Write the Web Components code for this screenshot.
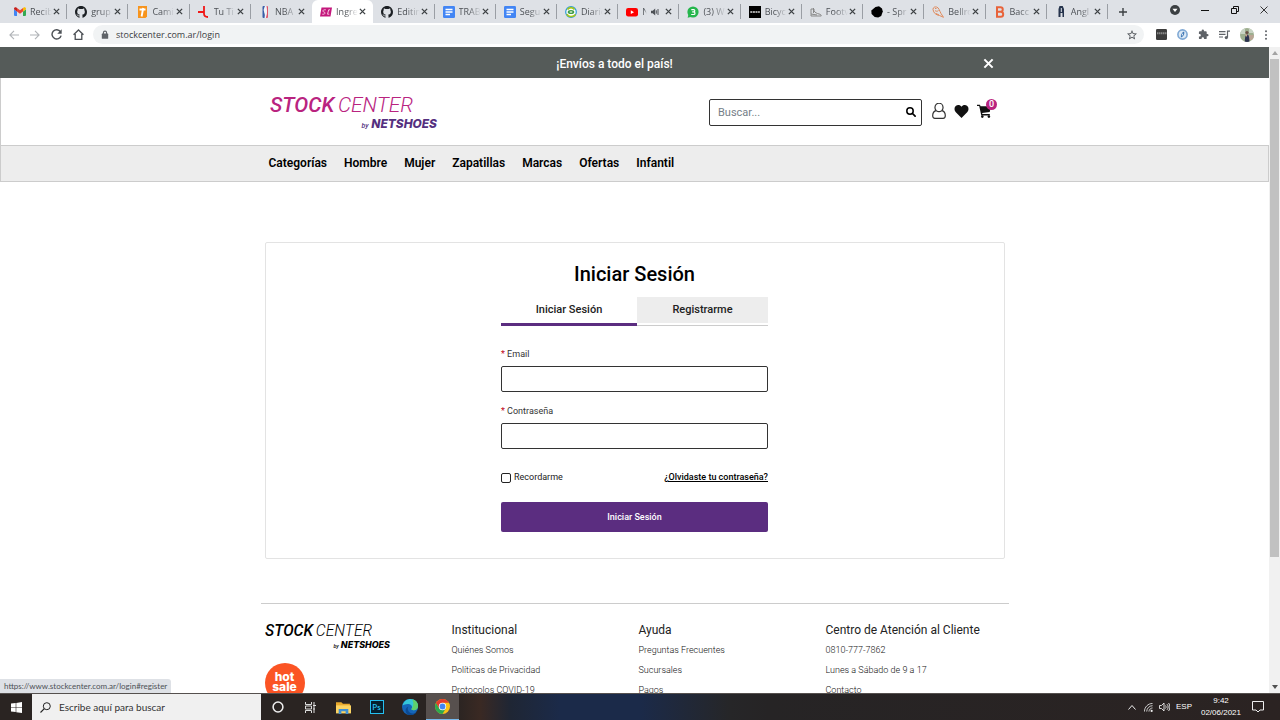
<!DOCTYPE html>
<html lang="es">
<head>
<meta charset="utf-8">
<title>Iniciar Sesión - Stock Center</title>
<style>
  html, body { margin: 0; height: 100%; overflow: hidden; background: #fff; }
  body { font-family: Roboto, "Liberation Sans", sans-serif; color: #222; }
</style>
</head>
<body>
<desktop-screen></desktop-screen>

<script>
const BASE = `
  *, *::before, *::after { box-sizing: border-box; }
  button, input { font: inherit; color: inherit; margin: 0; padding: 0; border: 0; background: none; border-radius: 0; outline: none; }
  a { color: inherit; text-decoration: none; }
  ui-icon { flex: none; }
`;

function define(name, css, html) {
  const template = document.createElement('template');
  customElements.define(name, class extends HTMLElement {
    constructor() {
      super();
      this.attachShadow({ mode: 'open' });
    }
    connectedCallback() {
      if (this.shadowRoot.childNodes.length) return;
      template.innerHTML = `<style>${BASE}${css}</style>${typeof html === 'function' ? html(this) : html}`;
      this.shadowRoot.append(template.content.cloneNode(true));
    }
  });
}

/* Each entry: [viewBox, markup] */
const ICONS = {
  gmail: ['0 0 24 24', '<path fill="#4285f4" d="M2 20h4V11L0 6.500V18a2 2 0 0 0 2 2z"/><path fill="#34a853" d="M18 20h4a2 2 0 0 0 2-2V6.500L18 11z"/><path fill="#ea4335" d="M6 11V4l6 4.500L18 4v7l-6 4.500z"/><path fill="#c5221f" d="M0 6.500 6 11V4L4.800 3.200C2.800 1.800 0 3 0 5.500z"/><path fill="#fbbc04" d="M24 6.500 18 11V4l1.200-.8C21.200 1.800 24 3 24 5.500z"/>'],
  github: ['0 0 16 16', '<path fill="#1b1f23" d="M8 0C3.580 0 0 3.580 0 8c0 3.540 2.290 6.530 5.470 7.590.4.070.55-.17.55-.38 0-.19-.01-.82-.01-1.490-2.010.37-2.530-.49-2.690-.94-.09-.23-.48-.94-.82-1.130-.28-.15-.68-.52-.01-.53.63-.01 1.080.58 1.230.82.72 1.210 1.870.87 2.330.66.07-.52.28-.87.51-1.070-1.780-.2-3.640-.89-3.640-3.950 0-.87.31-1.590.82-2.150-.08-.2-.36-1.020.08-2.120 0 0 .67-.21 2.200.82a7.600 7.600 0 0 1 4 0c1.530-1.040 2.200-.82 2.200-.82.44 1.100.16 1.920.08 2.120.51.56.82 1.270.82 2.150 0 3.070-1.870 3.750-3.650 3.950.29.25.54.73.54 1.480 0 1.070-.01 1.930-.01 2.200 0 .21.15.46.55.38A8 8 0 0 0 16 8c0-4.420-3.580-8-8-8z"/>'],
  camino: ['0 0 12 12', '<path fill="#f7941d" d="M2 0h9v10.500L9.500 12H2z"/><path fill="none" stroke="#fff" stroke-width="1.900" d="M3.500 3.500h6M7.200 2 5.600 10.500"/>'],
  tienda: ['0 0 12 12', '<path fill="none" stroke="#f01818" stroke-width="1.800" d="M6 0v7.500C6 10 7.500 11 10 11M0 6h6"/>'],
  nba: ['0 0 12 12', '<path fill="#3a5fa8" d="M3.500 1a1 1 0 0 1 1-1H6L5 5l1.500 7h-2a1 1 0 0 1-1-1z"/><path fill="#e0566a" d="M7 0h1a1 1 0 0 1 1 1v10a1 1 0 0 1-1 1H6.500L8 7z"/><path fill="#f4f4f8" d="M6 0h1.500L8 5l-1 7H5.500L6 8 4.600 4z"/>'],
  stock: ['0 0 12 12', '<path fill="#c4187c" d="M1.500 1.500H12l-1.500 9H0z"/><path fill="none" stroke="#f3c6e0" d="M5.800 3.800H4.200c-1.600 0-1.600 2.200-.2 2.200s1.200 2.200-.2 2.200H2.300M10 3.800H8.700L7.500 8.200h1.800"/>'],
  docs: ['0 0 12 12', '<rect width="12" height="12" rx="1.200" fill="#4285f4"/><path stroke="#fff" stroke-width="1.300" d="M2.500 3.500h7M2.500 6h7M2.500 8.500h4.500"/>'],
  diario: ['0 0 12 12', '<circle cx="6" cy="6" r="5.300" fill="#fff" stroke="#2a9bd6" stroke-width="1.200"/><path fill="none" stroke="#a5c51c" stroke-width="1.600" d="M2 8c1 3 6 3.500 8.500.5M2.500 3.500c2-2.500 5-2.500 7 0"/><ellipse cx="6" cy="6" rx="3.300" ry="2" fill="#3d9b46"/><ellipse cx="6" cy="6" rx="1.500" ry=".8" fill="#e8f6dd"/>'],
  youtube: ['0 0 12 12', '<rect y="2" width="12" height="8.400" rx="2.200" fill="#f00"/><path fill="#fff" d="m4.800 4.300 3.200 1.900-3.200 1.900z"/>'],
  whatsapp: ['0 0 12 12', '<circle cx="6" cy="6" r="5.600" fill="#25b64c"/><path fill="#25b64c" d="m.6 11.700 1-4 3 3z"/><path fill="none" stroke="#fff" stroke-width="1.200" d="M4.300 3.600h2.300c1.600 0 1.600 2.300 0 2.300H5.200h1.500c1.700 0 1.700 2.600 0 2.600H4.200"/>'],
  bicycle: ['0 0 12 12', '<path d="M0 0h12v12H0z"/><path stroke="#ddd" stroke-width="1.400" stroke-dasharray="2 .6" d="M1.300 6h9.500"/>'],
  shoe: ['0 0 12 12', '<path fill="none" stroke="#888" d="M1 8.500V3h3v2c1 1.500 3 2.500 5 3 1.500.2 2.200.8 2.200 2H1zM3.500 2v5M1 8l6 1"/>'],
  blob: ['0 0 12 12', '<path d="M4.500 1 8 .3l3 2.200.8 3-1.600 4.500-3 1.500-3.500-.6L.6 8 .3 4.500z"/>'],
  owl: ['0 0 12 12', '<path fill="none" stroke="#e08a5c" d="M1 3.500C1 1 3 .7 4.500 1 7 1.500 7.500 5 9 7.500l2.500 3.800-4-1.800C4 9 1.500 7 1 3.500zM3 4.500c1 1 2.500 1 3.500 0M4 7.500l3 1.500M3 2.500h1.500"/>'],
  letterB: ['0 0 12 12', '<path fill="none" stroke="#e8633a" stroke-width="2" d="M3 1.300h3.500c3 0 3 4.400 0 4.400H3h3.800c3.200 0 3.200 5 0 5H3zM3 .3v11.400"/>'],
  angle: ['0 0 12 12', '<path fill="#26344d" d="M4.500 0h3.200L9 3v8H7.500V7h-2v4H3.500V3z"/><path stroke="#dfe3ea" stroke-width="1" d="M6.300 2v4"/>'],
  close: ['0 0 8 8', '<path stroke="currentColor" stroke-width="1.500" d="m1 1 6 6M7 1 1 7"/>'],
  plus: ['0 0 8 8', '<path stroke="currentColor" stroke-width="1.400" d="M4 0v8M0 4h8"/>'],
  speaker: ['0 0 8 8', '<path fill="currentColor" d="M0 2.700h1.700L4.200.5v7L1.700 5.300H0z"/><path fill="none" stroke="currentColor" d="M5.300 2.300v3.400M7 1v6"/>'],
  account: ['0 0 10 10', '<circle cx="5" cy="5" r="5" fill="#3c4043"/><path fill="#fff" d="M2.500 3.800h5L5 7z"/>'],
  minimize: ['0 0 8 8', '<path stroke="#111" d="M0 4.500h8"/>'],
  restore: ['0 0 8 8', '<path fill="none" stroke="#111" d="M.5 2.500h5v5h-5zM2.500 2.500v-2h5v5h-2"/>'],
  cross: ['0 0 8 8', '<path stroke="#222" stroke-width=".9" d="m.5.500 7 7M7.500.5l-7 7"/>'],
  back: ['0 0 10 10', '<path fill="none" stroke="currentColor" stroke-width="1.100" d="M10 5H1M5 .8.900 5 5 9.200"/>'],
  forward: ['0 0 10 10', '<path fill="none" stroke="currentColor" stroke-width="1.100" d="M0 5h9M5 .8 9.100 5 5 9.200"/>'],
  reload: ['0 0 10 10', '<path fill="none" stroke="currentColor" stroke-width="1.300" d="M8.600 2.500A4.200 4.200 0 1 0 9.200 6"/><path fill="currentColor" d="M9.700.3v4H5.700z"/>'],
  home: ['0 0 10 10', '<path fill="none" stroke="currentColor" stroke-width="1.200" d="M.5 5.200 5 .9l4.500 4.300M2 4.500v4.900h6V4.500"/>'],
  lock: ['0 0 8 10', '<rect x=".8" y="3.600" width="6.400" height="5.200" rx=".6" fill="#5f6368"/><path fill="none" stroke="#5f6368" stroke-width="1.100" d="M2.400 4V2.700a1.600 1.600 0 0 1 3.200 0V4"/>'],
  star: ['0 0 24 24', '<path fill="currentColor" d="m22 9.240-7.190-.62L12 2 9.190 8.630 2 9.240l5.460 4.730L5.820 21 12 17.270 18.180 21l-1.630-7.030zM12 15.400l-3.760 2.270 1-4.280-3.320-2.880 4.380-.38L12 6.100l1.710 4.040 4.380.38-3.320 2.880 1 4.280z"/>'],
  extDark: ['0 0 11 11', '<rect width="11" height="11" rx="1.300" fill="#3c3c3c"/><path stroke="#888" stroke-width="2" stroke-dasharray="1.500 .5" d="M1 4.300h9.500"/>'],
  extBlue: ['0 0 11 11', '<circle cx="5.500" cy="5.500" r="4.600" fill="#dce9f5" stroke="#7fa8d4" stroke-width="1.600"/><path fill="#3e77b5" d="M7 2.500c1 2-.5 5-3 6-.7-2 .6-5 3-6z"/><path fill="#fff" d="M6 4.200c.5 1-.3 2.300-1.200 2.700 0-1 .3-2 1.200-2.700z"/>'],
  puzzle: ['0 0 24 24', '<path fill="#5f6368" d="M20.500 11H19V7a2 2 0 0 0-2-2h-4V3.500a2.500 2.500 0 0 0-5 0V5H4a2 2 0 0 0-2 2v3.800h1.500a2.700 2.700 0 0 1 0 5.400H2V20a2 2 0 0 0 2 2h3.800v-1.500a2.700 2.700 0 0 1 5.400 0V22H17a2 2 0 0 0 2-2v-4h1.500a2.500 2.500 0 0 0 0-5z"/>'],
  playlist: ['0 0 11 10', '<path fill="none" stroke="#5f6368" stroke-width="1.200" d="M0 1.600h6.500M0 4.300h6.500M0 7h4M8.500 7.500V1.200H11"/><circle cx="7.300" cy="7.600" r="1.600" fill="#5f6368"/>'],
  avatar: ['0 0 14 14', '<clipPath id="a"><circle cx="7" cy="7" r="7"/></clipPath><g clip-path="url(#a)"><path fill="#9dae8f" d="M0 0h14v14H0z"/><path fill="#c8d3c4" d="M0 0h5v6H0zM9 1h5v4H9z"/><path fill="#b9a594" d="M8 7h6v5H8z"/><circle cx="7" cy="4.500" r="1.600" fill="#6b4f45"/><path fill="#2c3350" d="M4.800 14c0-5 .8-7.500 2.400-7.500S9.400 9 9.400 14z"/><path fill="#d6a58d" d="M5 6.500h2.500L6.500 9z"/></g>'],
  dots: ['0 0 4 10', '<g fill="#5f6368"><circle cx="2" cy="1.200" r="1"/><circle cx="2" cy="5" r="1"/><circle cx="2" cy="8.800" r="1"/></g>'],
  magnify: ['0 0 10 10', '<circle cx="4" cy="4" r="3.200" fill="none" stroke="currentColor" stroke-width="1.500"/><path stroke="currentColor" stroke-width="1.700" stroke-linecap="round" d="m6.500 6.500 2.600 2.600"/>'],
  user: ['0 0 14 16', '<path fill="none" stroke="#333" stroke-width="1.200" d="M4.300 7.600C3 6.500 2.900 5 3 4.200a4 4 0 0 1 8 0c.1.800 0 2.300-1.300 3.400M4.300 7.600C6 9 8 9 9.700 7.600c2.400.4 3.600 2.400 3.600 5.200 0 1.500-.8 2.500-2.200 2.500H2.900C1.500 15.300.7 14.300.7 12.800.7 10 1.900 8 4.300 7.600z"/>'],
  heart: ['0 0 14 13', '<path fill="#111" d="M7 13 1.100 7C-.4 5.400-.4 2.600 1.200 1.100 2.800-.4 5.600-.3 7 1.700c1.400-2 4.200-2.100 5.800-.6 1.600 1.500 1.600 4.300.1 5.900z"/>'],
  cart: ['0 0 15 14', '<path fill="#111" d="M0 .8h3l.5 1.400H14l-1.300 5.700-7.600 1 .3 1.200h7.400v1.300H4.300L2.200 2H0z"/><circle cx="5.300" cy="12.600" r="1.300" fill="#111"/><circle cx="11.900" cy="12.600" r="1.300" fill="#111"/>'],
  up: ['0 0 6 4', '<path fill="currentColor" d="M3 0 6 4H0z"/>'],
  down: ['0 0 6 4', '<path fill="currentColor" d="M0 0h6L3 4z"/>'],
  windows: ['0 0 11 11', '<path fill="#fff" d="M0 1.600 4.700 1v4.200H0zM5.300.9 11 0v5.200H5.300zM0 5.800h4.700V10L0 9.400zM5.300 5.800H11V11l-5.700-.8z"/>'],
  glass: ['0 0 11 11', '<circle cx="6.800" cy="4.200" r="3.500" fill="none" stroke="#222"/><path stroke="#222" stroke-width="1.100" d="M4.300 6.700.5 10.500"/>'],
  cortana: ['0 0 11 11', '<circle cx="5.500" cy="5.500" r="4.500" fill="none" stroke="#eee" stroke-width="1.400"/>'],
  taskview: ['0 0 11 11', '<path fill="none" stroke="#ddd" d="M.5 0v2.500h6V0M.5 11V8.500h6V11M.5 4h6v3h-6zM9 0v11M8 3.500h3M8 7h2"/>'],
  folder: ['0 0 14 12', '<path fill="#e8a92d" d="M0 1h5l1.500 1.500H13V11H0z"/><path fill="#fcd462" d="M0 4h14v7.500H0z"/><path fill="#3f8fd2" d="M2.500 12V7.500h9V12H9V9.500H5V12z"/>'],
  edge: ['0 0 16 16', '<circle cx="8" cy="8" r="8" fill="#1565b8"/><path fill="#35c6d8" d="M.5 6.500C1.800 2 5 0 8.500 0 13 0 16 3.300 16 7c0 3-2.200 4.300-4.300 4.300-2 0-2.600-.8-2-1.700.9-1.300.3-4.300-3.200-4.600-2.600-.2-4.600.7-6 1.500z"/><path fill="#5fd06b" d="M10 .3C14 1.200 16 4 16 7c0 3-2.200 4.300-4.300 4.300-2 0-2.600-.8-2-1.700C11 8 12.500 4 10 .3z"/><path fill="#0c4a92" d="M6.300 7.500C5 9.500 5.800 13.500 10 14.500c2 .4 4-.5 5-1.800-2 3-6 4-9 3C2.500 13 3 9 6.300 7.500z"/>'],
  chrome: ['0 0 16 16', '<circle cx="8" cy="8" r="8" fill="#fbc116"/><path fill="#e33b2e" d="M1.100 4A8 8 0 0 1 14.900 4H8L5 10z"/><path fill="#2da94f" d="M1.100 4A8 8 0 0 0 8 16l3.500-6L8 11.500 4.500 10z"/><path fill="#e33b2e" d="M1.100 4 4.600 10 8 4z"/><circle cx="8" cy="8" r="3.900" fill="#fff"/><circle cx="8" cy="8" r="3.100" fill="#4285f4"/>'],
  chevron: ['0 0 8 5', '<path fill="none" stroke="#eee" d="m.5 4.500 3.500-4 3.500 4"/>'],
  wifi: ['0 0 10 10', '<g fill="none" stroke="#ddd"><path d="M.5 9.500c0-5 4-9 9-9"/><path d="M3 9.500C3 6 6 3 9.500 3"/><path d="M5.500 9.500c0-2 2-4 4-4"/></g><circle cx="8.500" cy="8.800" r="1.200" fill="#eee"/>'],
  volume: ['0 0 11 10', '<path fill="none" stroke="#eee" stroke-width=".9" d="M.5 3.500h2L5 1v8L2.500 6.500h-2zM6.500 3.500c.8 1 .8 2 0 3M8 2.200c1.500 1.800 1.500 3.800 0 5.600M9.600 1c1.800 2.500 1.800 5.500 0 8"/>'],
  notice: ['0 0 12 12', '<path fill="none" stroke="#eee" d="M.5.500h11v8.500H8L6 11 4 9H.5z"/>']
};

customElements.define('ui-icon', class extends HTMLElement {
  connectedCallback() {
    if (this.shadowRoot) return;
    const [box, body] = ICONS[this.getAttribute('name')];
    const w = this.getAttribute('w'), h = this.getAttribute('h') || w;
    this.attachShadow({ mode: 'open' }).innerHTML =
      `<style>:host{display:block;width:${w}px;height:${h}px}svg{display:block}</style>
       <svg viewBox="${box}" width="${w}" height="${h}" aria-hidden="true">${body}</svg>`;
  }
});

/* ---------- Browser chrome ---------- */

define('browser-tab', `
  :host { display: flex; flex: 1 1 0; min-width: 0; align-items: center; height: 23px; padding: 0 6px 0 8px; border-right: 1px solid #a0a4a9; border-image: linear-gradient(transparent 5px, #9a9ea4 5px, #9a9ea4 18px, transparent 18px) 1; color: #4d5156; }
  :host([active]) { background: #fff; border-radius: 6px 6px 0 0; border-image: none; border-color: #fff; }
  :host([next-active]) { border-image: none; border-color: transparent; }
  .title { display: flex; align-items: center; flex: 1; min-width: 0; gap: 4px; text-align: left; }
  .text { flex: 1; min-width: 0; overflow: hidden; white-space: nowrap; line-height: 14px; -webkit-mask-image: linear-gradient(90deg, #000 40%, transparent 95%); mask-image: linear-gradient(90deg, #000 40%, transparent 95%); }
  .close { flex: none; color: #3c4043; }
  .audio { margin-right: 6px; }
`, el => `
  <button class="title"><ui-icon name="${el.getAttribute('icon')}" w="12"></ui-icon><span class="text"><slot></slot></span>
  ${el.hasAttribute('audio') ? '<ui-icon class="audio" name="speaker" w="8"></ui-icon>' : ''}</button>
  <button class="close" aria-label="Cerrar pestaña"><ui-icon name="close" w="7"></ui-icon></button>
`);

define('browser-tabs', `
  :host { display: flex; height: 23px; background: #dee1e6; font: 9px "Open Sans", "Noto Sans", sans-serif; }
  .strip { display: flex; flex: 1; min-width: 0; padding-left: 6px; }
  .new { width: 30px; display: grid; place-items: center; color: #3c4043; }
  .win { display: flex; align-items: center; width: 142px; justify-content: space-between; padding: 0 12px 3px 32px; }
`, `
  <div class="strip">
    <browser-tab icon="gmail">Recib</browser-tab>
    <browser-tab icon="github">grup</browser-tab>
    <browser-tab icon="camino">Cami</browser-tab>
    <browser-tab icon="tienda">Tu Ti</browser-tab>
    <browser-tab icon="nba" next-active>NBA</browser-tab>
    <browser-tab icon="stock" active>Ingre</browser-tab>
    <browser-tab icon="github">Editin</browser-tab>
    <browser-tab icon="docs">TRAB</browser-tab>
    <browser-tab icon="docs">Segu</browser-tab>
    <browser-tab icon="diario">Diario</browser-tab>
    <browser-tab icon="youtube" audio>N</browser-tab>
    <browser-tab icon="whatsapp">(3) W</browser-tab>
    <browser-tab icon="bicycle">Bicyc</browser-tab>
    <browser-tab icon="shoe">Footv</browser-tab>
    <browser-tab icon="blob">- Spr</browser-tab>
    <browser-tab icon="owl">Bellro</browser-tab>
    <browser-tab icon="letterB">Bacc</browser-tab>
    <browser-tab icon="angle">Angl</browser-tab>
  </div>
  <button class="new" aria-label="Nueva pestaña"><ui-icon name="plus" w="8"></ui-icon></button>
  <div class="win">
    <button aria-label="Buscar pestañas"><ui-icon name="account" w="10"></ui-icon></button>
    <button aria-label="Minimizar"><ui-icon name="minimize" w="8"></ui-icon></button>
    <button aria-label="Restaurar"><ui-icon name="restore" w="8"></ui-icon></button>
    <button aria-label="Cerrar"><ui-icon name="cross" w="8"></ui-icon></button>
  </div>
`);

define('browser-toolbar', `
  :host { display: flex; align-items: center; height: 24px; padding: 0 12px 1px 9px; background: #fff; color: #4d5156; font: 9px "Open Sans", "Noto Sans", sans-serif; }
  .nav { display: flex; gap: 11px; flex: none; }
  .nav .off { color: #b0b3b7; }
  .omni { display: flex; align-items: center; flex: 1; height: 19px; margin: 0 12px 0 9px; padding: 0 6px 0 8px; gap: 7px; border-radius: 10px; background: #f1f3f4; }
  .omni input { flex: 1; min-width: 0; height: 18px; padding-bottom: 1px; color: #3c4043; }
  .ext { display: flex; align-items: center; gap: 10px; flex: none; }
`, `
  <div class="nav">
    <button class="off" aria-label="Atrás"><ui-icon name="back" w="10"></ui-icon></button>
    <button class="off" aria-label="Adelante"><ui-icon name="forward" w="10"></ui-icon></button>
    <button aria-label="Recargar"><ui-icon name="reload" w="11"></ui-icon></button>
    <button aria-label="Inicio"><ui-icon name="home" w="11"></ui-icon></button>
  </div>
  <div class="omni">
    <ui-icon name="lock" w="8" h="10"></ui-icon>
    <input type="text" value="stockcenter.com.ar/login" aria-label="Dirección" spellcheck="false">
    <button aria-label="Favorito"><ui-icon name="star" w="12"></ui-icon></button>
  </div>
  <div class="ext">
    <button aria-label="Extensión"><ui-icon name="extDark" w="11"></ui-icon></button>
    <button aria-label="Extensión"><ui-icon name="extBlue" w="11"></ui-icon></button>
    <button aria-label="Extensiones"><ui-icon name="puzzle" w="11"></ui-icon></button>
    <button aria-label="Lista"><ui-icon name="playlist" w="11" h="10"></ui-icon></button>
    <button aria-label="Perfil"><ui-icon name="avatar" w="14"></ui-icon></button>
    <button aria-label="Menú"><ui-icon name="dots" w="4" h="10"></ui-icon></button>
  </div>
`);

define('scroll-bar', `
  :host { display: flex; flex-direction: column; align-items: center; width: 11px; flex: none; background: #f1f1f1; color: #505050; }
  .arrow { height: 12px; display: grid; place-items: center; flex: none; }
  .arrow.top { color: #a3a3a3; }
  .track { flex: 1; width: 9px; }
  .thumb { height: 80%; background: #c1c1c1; }
`, `
  <span class="arrow top"><ui-icon name="up" w="6" h="4"></ui-icon></span>
  <div class="track"><div class="thumb"></div></div>
  <span class="arrow"><ui-icon name="down" w="6" h="4"></ui-icon></span>
`);

/* ---------- Store page ---------- */

const CONTAINER = `.container { width: 100%; max-width: 748px; margin: 0 auto; }`;

define('store-logo', `
  :host { display: block; width: 167px; --main: #b9237f; --sub: #55307f; }
  :host([mono]) { width: 125px; --main: #000; --sub: #000; }
  svg { display: block; width: 100%; overflow: visible; }
  .main { fill: var(--main); font: italic 500 21px Roboto, sans-serif; }
  .thin { fill: var(--main); font: italic 300 21px Roboto, sans-serif; }
  .by { fill: var(--sub); font: italic 500 7px Roboto, sans-serif; }
  .sub { fill: var(--sub); font: italic 800 12px Inter, sans-serif; }
`, `
  <svg viewBox="0 0 168 34" role="img" aria-label="Stock Center by Netshoes">
    <text class="main" x="0" y="16">STOCK</text>
    <text class="thin" x="144" y="16" text-anchor="end">CENTER</text>
    <text class="by" x="92" y="32">by</text>
    <text class="sub" x="168" y="32" text-anchor="end">NETSHOES</text>
  </svg>
`);

define('promo-bar', `
  :host { display: block; background: #555b59; color: #fff; font-size: 12px; font-weight: 500; }
  ${CONTAINER}
  .container { display: flex; align-items: center; height: 31px; }
  p { flex: 1; margin: 0; padding-top: 2px; text-align: center; line-height: 16px; }
  button { width: 40px; height: 31px; display: grid; place-items: center; padding-top: 2px; }
`, `
  <div class="container"><p>¡Envíos a todo el país!</p><button aria-label="Cerrar aviso"><ui-icon name="close" w="11"></ui-icon></button></div>
`);

define('store-header', `
  :host { display: block; border-left: 1px solid #ccc; background: #fff; }
  ${CONTAINER}
  .container { display: flex; align-items: center; height: 67px; padding: 2px 12px 0 9px; }
  .search { display: flex; align-items: center; width: 213px; height: 27px; margin-left: auto; padding: 0 5px 0 8px; border: 1px solid #333; border-radius: 2px; font-size: 11px; }
  .search input { flex: 1; min-width: 0; height: 24px; }
  .search input::placeholder { color: #757e87; opacity: 1; }
  .search button { color: #000; padding-bottom: 2px; }
  .icons { display: flex; align-items: center; gap: 8px; margin-left: 10px; padding-bottom: 3px; }
  .cart { position: relative; width: 20px; }
  .badge { position: absolute; top: -5px; right: 0; width: 11px; height: 11px; border-radius: 50%; background: #b9237f; color: #fff; font-size: 9px; font-weight: 500; line-height: 11px; text-align: center; }
`, `
  <div class="container">
    <a href="#" aria-label="Inicio"><store-logo></store-logo></a>
    <form class="search">
      <input type="search" placeholder="Buscar..." aria-label="Buscar">
      <button type="button" aria-label="Buscar"><ui-icon name="magnify" w="10"></ui-icon></button>
    </form>
    <div class="icons">
      <a href="#" aria-label="Mi cuenta"><ui-icon name="user" w="14" h="16"></ui-icon></a>
      <a href="#" aria-label="Favoritos"><ui-icon name="heart" w="15" h="13"></ui-icon></a>
      <a class="cart" href="#" aria-label="Carrito"><ui-icon name="cart" w="15" h="14"></ui-icon><span class="badge">0</span></a>
    </div>
  </div>
`);

define('store-nav', `
  :host { display: block; border: 1px solid #ccc; background: #ededed; color: #000; font-size: 12px; font-weight: 600; }
  ${CONTAINER}
  .container { display: flex; align-items: center; gap: 17px; height: 35px; padding: 0 8px 1px; }
`, `
  <nav class="container">
    <a href="#">Categorías</a><a href="#">Hombre</a><a href="#">Mujer</a><a href="#">Zapatillas</a><a href="#">Marcas</a><a href="#">Ofertas</a><a href="#">Infantil</a>
  </nav>
`);

define('text-field', `
  :host { display: block; margin-bottom: 12px; font-size: 9px; line-height: 14px; }
  label { display: block; margin-bottom: 5px; color: #333; }
  .mark { color: #c00418; }
  input { display: block; width: 100%; height: 26px; padding: 0 8px; border: 1px solid #333; border-radius: 2px; background: #fff; }
`, el => `
  <label for="field"><span class="mark">*</span> ${el.getAttribute('label')}</label>
  <input id="field" type="${el.getAttribute('type')}">
`);

define('login-card', `
  :host { display: block; border: 1px solid #e3e3e3; border-radius: 2px; padding: 17px 16px 26px; background: #fff; }
  .inner { max-width: 267px; margin: 0 auto; }
  h1 { margin: 0 0 9px; font-size: 20px; font-weight: 500; line-height: 28px; text-align: center; color: #000; }
  .tabs { display: flex; margin-bottom: 21px; font-size: 11px; font-weight: 500; line-height: 26px; text-align: center; }
  .tabs a { flex: 131; height: 29px; background: #ededed content-box; padding-bottom: 2px; border-bottom: 1px solid #ccc; }
  .tabs a.on { flex: 136; background: none; padding: 0; border-bottom: 3px solid #5b2d80; }
  .row { display: flex; justify-content: space-between; align-items: center; margin: 21px 0 17px; font-size: 9px; line-height: 15px; }
  .check { display: flex; align-items: center; gap: 3px; }
  .check input { appearance: none; width: 10px; height: 10px; border: 1px solid #222; border-radius: 2px; background: #fff; }
  .row a { color: #000; font-weight: 500; text-decoration: underline; }
  .submit { display: block; width: 100%; height: 30px; border-radius: 2px; background: #5b2d80; color: #fff; font-size: 9px; font-weight: 500; }
`, `
  <div class="inner">
    <h1>Iniciar Sesión</h1>
    <nav class="tabs"><a class="on" href="#login">Iniciar Sesión</a><a href="#register">Registrarme</a></nav>
    <form>
      <text-field label="Email" type="email"></text-field>
      <text-field label="Contraseña" type="password"></text-field>
      <div class="row">
        <label class="check"><input type="checkbox">Recordarme</label>
        <a href="#">¿Olvidaste tu contraseña?</a>
      </div>
      <button class="submit" type="button">Iniciar Sesión</button>
    </form>
  </div>
`);

define('hot-sale', `
  :host { display: grid; place-content: center; box-sizing: border-box; width: 40px; height: 40px; padding-bottom: 2px; border-radius: 50%; background: #fb5424; color: #fff; font: 800 12px/10px Inter, sans-serif; text-align: center; }
  span { display: block; }
`, `<span>hot</span><span>sale</span>`);

define('store-footer', `
  :host { display: block; }
  ${CONTAINER}
  .container { display: grid; grid-template-columns: repeat(4, 1fr); padding-top: 16px; border-top: 1px solid #ccc; }
  .container > * { padding-left: 4px; }
  store-logo { margin: 4px 0 14px; }
  h2 { margin: 0; font-size: 12px; font-weight: 400; line-height: 20px; color: #222; }
  ul { margin: 0; padding: 0; list-style: none; font-size: 9px; font-weight: 300; line-height: 20px; color: #111; }
`, `
  <footer class="container">
    <div><store-logo mono></store-logo><hot-sale></hot-sale></div>
    <section><h2>Institucional</h2><ul><li><a href="#">Quiénes Somos</a></li><li><a href="#">Políticas de Privacidad</a></li><li><a href="#">Protocolos COVID-19</a></li></ul></section>
    <section><h2>Ayuda</h2><ul><li><a href="#">Preguntas Frecuentes</a></li><li><a href="#">Sucursales</a></li><li><a href="#">Pagos</a></li></ul></section>
    <section><h2>Centro de Atención al Cliente</h2><ul><li>0810-777-7862</li><li>Lunes a Sábado de 9 a 17</li><li><a href="#">Contacto</a></li></ul></section>
  </footer>
`);

define('store-page', `
  :host { display: block; flex: 1; min-width: 0; overflow: hidden; background: #fff; }
  ${CONTAINER}
  main.container { padding: 60px 4px 44px; }
`, `
  <promo-bar></promo-bar>
  <store-header></store-header>
  <store-nav></store-nav>
  <main class="container"><login-card></login-card></main>
  <store-footer></store-footer>
`);

define('link-status', `
  :host { display: block; position: absolute; left: 0; bottom: 0; height: 14px; padding: 0 4px; border-radius: 0 3px 0 0; background: #dee1e6; color: #4d5156; font: 8px/14px Lato, "Noto Sans", sans-serif; }
`, `<slot></slot>`);

/* ---------- System task bar ---------- */

define('task-bar', `
  :host { display: flex; height: 27px; flex: none; border-top: 1px solid #55504e; background: linear-gradient(90deg, #2a2422 0 457px, #3a2923 480px, #1f2634 510px, #1b2a49 560px, #1b2a49 640px, #262628 730px, #262425 60%, #2b2322 100%); color: #fff; font-family: Lato, "Noto Sans", sans-serif; }
  button { display: grid; place-items: center; height: 26px; }
  .start { width: 32px; }
  .find { display: flex; align-items: center; width: 229px; gap: 8px; padding: 0 8px; background: #f0f0f0; color: #333; font-size: 10px; }
  .find input { flex: 1; min-width: 0; height: 24px; }
  .find input::placeholder { color: #333; opacity: 1; }
  .apps { display: flex; }
  .apps button { width: 33px; }
  .apps .on { background: #57504e; border-bottom: 1px solid #76b9ed; }
  .ps { width: 14px; height: 14px; border: 1px solid #26c0f0; background: #05202f; color: #2cc5f5; font-size: 8px; font-weight: 600; line-height: 12px; }
  .tray { display: flex; align-items: center; margin-left: auto; padding-right: 16px; font: 8px/12px "Liberation Sans", sans-serif; }
  .tray > * { flex: none; }
  .lang { margin: 0 8px 0 6px; }
  .clock { width: 42px; text-align: center; }
  .vol { margin-left: 6px; }
  .note { margin-left: 10px; }
  .wifi { margin-left: 8px; }
`, `
  <button class="start" aria-label="Inicio"><ui-icon name="windows" w="11"></ui-icon></button>
  <div class="find"><ui-icon name="glass" w="11"></ui-icon><input type="text" placeholder="Escribe aquí para buscar" aria-label="Buscar en el equipo"></div>
  <div class="apps">
    <button aria-label="Cortana"><ui-icon name="cortana" w="12"></ui-icon></button>
    <button aria-label="Vista de tareas"><ui-icon name="taskview" w="11"></ui-icon></button>
    <button aria-label="Explorador"><ui-icon name="folder" w="15" h="13"></ui-icon></button>
    <button aria-label="Photoshop"><span class="ps">Ps</span></button>
    <button aria-label="Edge"><ui-icon name="edge" w="16"></ui-icon></button>
    <button class="on" aria-label="Chrome"><ui-icon name="chrome" w="15"></ui-icon></button>
  </div>
  <div class="tray">
    <ui-icon name="chevron" w="8" h="5"></ui-icon>
    <ui-icon class="wifi" name="wifi" w="9"></ui-icon>
    <ui-icon class="vol" name="volume" w="11" h="10"></ui-icon>
    <span class="lang">ESP</span>
    <div class="clock"><div>9:42</div><div>02/06/2021</div></div>
    <ui-icon class="note" name="notice" w="12"></ui-icon>
  </div>
`);

define('desktop-screen', `
  :host { display: flex; flex-direction: column; height: 100vh; }
  .view { display: flex; flex: 1; min-height: 0; position: relative; }
`, `
  <browser-tabs></browser-tabs>
  <browser-toolbar></browser-toolbar>
  <div class="view">
    <store-page></store-page>
    <scroll-bar></scroll-bar>
    <link-status>https://www.stockcenter.com.ar/login#register</link-status>
  </div>
  <task-bar></task-bar>
`);
</script>
</body>
</html>
